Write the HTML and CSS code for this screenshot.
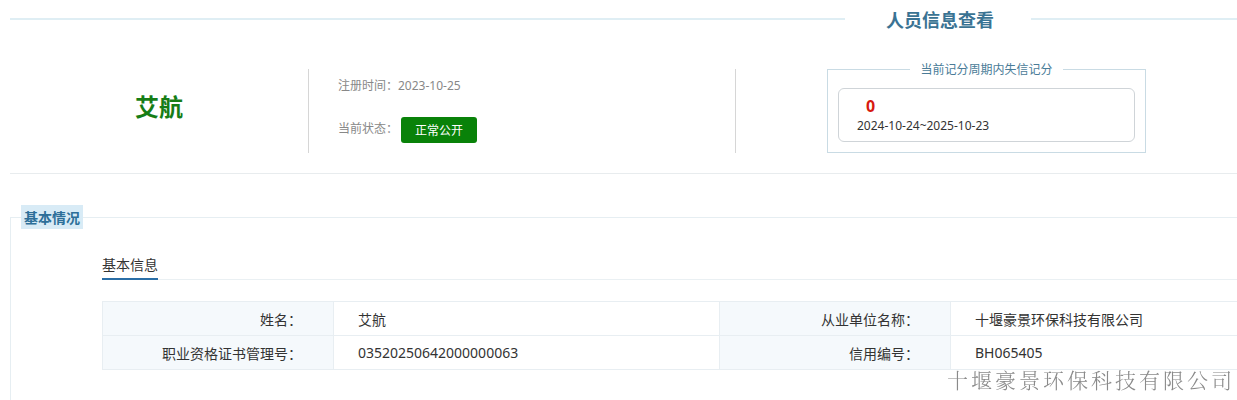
FILE: index.html
```html
<!DOCTYPE html>
<html lang="zh-CN">
<head>
    <meta charset="UTF-8">
    <meta name="viewport" content="width=device-width, initial-scale=1.0">
    <title>人员信息查看</title>
    <link rel="stylesheet" href="styles.css">
</head>
<body>
    <div class="page">
        <div class="title-bar">
            <span class="title-line title-line-left"></span>
            <h2 class="page-title">人员信息查看</h2>
            <span class="title-line"></span>
        </div>

        <div class="summary">
            <div class="person-name">艾航</div>
            <div class="person-info">
                <div class="info-row">注册时间：2023-10-25</div>
                <div class="info-row">
                    当前状态：<span class="status-btn">正常公开</span>
                </div>
            </div>
            <div class="score-col">
                <fieldset class="score-box">
                    <legend>当前记分周期内失信记分</legend>
                    <div class="score-inner">
                        <div class="score-num">0</div>
                        <div class="score-period">2024-10-24~2025-10-23</div>
                    </div>
                </fieldset>
            </div>
        </div>

        <fieldset class="section">
            <legend>基本情况</legend>
            <div class="tabs">
                <span class="tab active">基本信息</span>
            </div>
            <table class="info-table">
                <tr>
                    <td class="label">姓名：</td>
                    <td class="value">艾航</td>
                    <td class="label">从业单位名称：</td>
                    <td class="value">十堰豪景环保科技有限公司</td>
                </tr>
                <tr>
                    <td class="label">职业资格证书管理号：</td>
                    <td class="value">03520250642000000063</td>
                    <td class="label">信用编号：</td>
                    <td class="value">BH065405</td>
                </tr>
            </table>
        </fieldset>
    </div>

    <div class="watermark">十堰豪景环保科技有限公司</div>
</body>
</html>
```

FILE: styles.css
```css
body {
    margin: 0;
    font-family: "Noto Sans", "Noto Sans CJK SC", sans-serif;
    background: #fff;
    color: #333;
    overflow: hidden;
}
.page {
    padding-left: 10px;
}
.title-bar {
    display: flex;
    align-items: center;
    height: 38px;
}
.title-line {
    flex: 1;
    height: 2px;
    background: #dfeef4;
}
.title-line-left {
    flex: 0 0 835px;
}
.page-title {
    margin: 0;
    padding: 0 37px 0 41px;
    font-family: "Noto Sans CJK SC", sans-serif;
    font-size: 18px;
    font-weight: bold;
    color: #3a7393;
    line-height: 22px;
}
.summary {
    display: flex;
    align-items: flex-start;
    margin-top: 31px;
    padding-bottom: 20px;
    border-bottom: 1px solid #e8ecee;
}
.person-name {
    width: 298px;
    height: 84px;
    line-height: 74px;
    text-align: center;
    font-family: "Noto Sans CJK SC", sans-serif;
    font-size: 24px;
    font-weight: bold;
    color: #167d16;
}
.person-info {
    width: 397px;
    height: 84px;
    border-left: 1px solid #d6d6d6;
    border-right: 1px solid #d6d6d6;
    padding-left: 29px;
    font-size: 12px;
    color: #888;
}
.info-row {
    line-height: 20px;
}
.info-row:first-child {
    margin-top: 7px;
    margin-bottom: 21px;
}
.status-btn {
    display: inline-block;
    margin-left: 3px;
    padding: 0 14px;
    height: 26px;
    line-height: 26px;
    background: #098209;
    color: #fff;
    border-radius: 3px;
    font-family: "Noto Sans CJK SC", sans-serif;
    vertical-align: middle;
}
.score-col {
    flex: 1;
    display: flex;
    justify-content: center;
    margin-top: -7px;
}
.score-box {
    width: 297px;
    margin: 0;
    padding: 12px 10px 10px;
    border: 1px solid #c9dbe4;
}
.score-box legend {
    margin: 0 auto;
    padding: 0 10px;
    font-family: "Noto Sans CJK SC", sans-serif;
    font-size: 12px;
    color: #4a7c98;
    line-height: 14px;
}
.score-inner {
    box-sizing: border-box;
    height: 54px;
    border: 1px solid #cfd4d8;
    border-radius: 6px;
    padding-left: 18px;
}
.score-num {
    margin: 5px 0 0 9px;
    font-size: 16px;
    font-weight: bold;
    color: #d71a10;
    line-height: 24px;
}
.score-period {
    font-size: 12px;
    color: #333;
    line-height: 16px;
}
.section {
    margin: 31px 0 0;
    padding: 0 0 30px 10px;
    border: 1px solid #e6eef2;
    border-right: none;
    border-bottom: none;
}
.section legend {
    padding: 0 3px;
    line-height: 24px;
    font-family: "Noto Sans CJK SC", sans-serif;
    font-size: 14px;
    font-weight: bold;
    color: #2d6f99;
    background: #d8ebf6;
}
.tabs {
    margin: 24px 0 0 81px;
    border-bottom: 1px solid #eaf0f3;
}
.tab {
    display: inline-block;
    font-family: "Noto Sans CJK SC", sans-serif;
    font-size: 14px;
    line-height: 20px;
    padding-bottom: 4px;
}
.tab.active {
    border-bottom: 2px solid #2a6ea6;
    margin-bottom: -1px;
}
.info-table {
    margin: 21px 0 0 81px;
    width: 1135px;
    table-layout: fixed;
    border-collapse: collapse;
    font-size: 14px;
}
.info-table td {
    box-sizing: border-box;
    height: 34px;
    padding: 0;
    border: 1px solid #e8eef2;
    border-right: none;
}
.info-table .label {
    width: 231px;
    padding-right: 31px;
    text-align: right;
    background: #f5f9fc;
}
.info-table .value {
    width: 386px;
    padding-left: 24px;
}
.info-table tr td:last-child {
    width: 287px;
}
.watermark {
    position: fixed;
    right: 2px;
    bottom: 6px;
    font-family: "Noto Serif CJK SC", "Noto Sans CJK SC", serif;
    font-size: 21px;
    letter-spacing: 3px;
    color: #8a8a8a;
    font-weight: 300;
}
```
